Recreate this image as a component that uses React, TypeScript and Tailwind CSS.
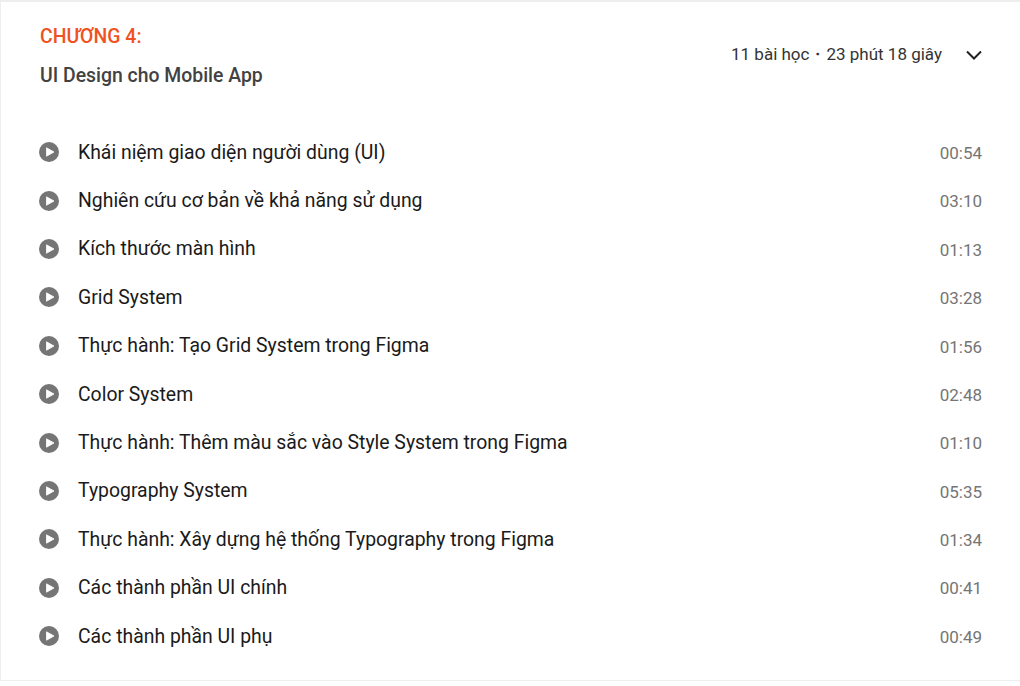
const lessons = [
  ['Khái niệm giao diện người dùng (UI)', '00:54'],
  ['Nghiên cứu cơ bản về khả năng sử dụng', '03:10'],
  ['Kích thước màn hình', '01:13'],
  ['Grid System', '03:28'],
  ['Thực hành: Tạo Grid System trong Figma', '01:56'],
  ['Color System', '02:48'],
  ['Thực hành: Thêm màu sắc vào Style System trong Figma', '01:10'],
  ['Typography System', '05:35'],
  ['Thực hành: Xây dựng hệ thống Typography trong Figma', '01:34'],
  ['Các thành phần UI chính', '00:41'],
  ['Các thành phần UI phụ', '00:49'],
];

function PlayIcon() {
  return (
    <svg width="20" height="20" viewBox="0 0 20 20" className="shrink-0">
      <circle cx="10" cy="10" r="10" fill="#757575" />
      <path d="M7.5 5.8 L15 10 L7.5 14.2 Z" fill="#fff" stroke="#fff" strokeLinejoin="round" strokeWidth="0.8" />
    </svg>
  );
}

export default function App() {
  return (
    <div className="h-[686px] w-[1020px] overflow-hidden bg-white font-['Roboto','Liberation_Sans',sans-serif]">
      <div className="h-[681px] border-t-2 border-b border-l border-[#eeeeee]">
        {/* chapter header */}
        <div className="flex items-center justify-between pl-[39px] pr-[37px] pt-[21px]">
          <div>
            <div className="text-[19.4px] leading-[28px] font-medium text-[#f05123]">CHƯƠNG 4:</div>
            <div className="mt-[11px] text-[19.4px] leading-[28px] font-medium text-[#424242]">UI Design cho Mobile App</div>
          </div>
          <div className="mb-[4px] flex items-center text-[17px] text-[#333333]">
            <span>11 bài học・23 phút 18 giây</span>
            <svg width="18" height="18" viewBox="0 0 18 18" className="ml-[23px]" fill="none" stroke="#212121" strokeWidth="2">
              <path d="M2 5.5 L9 12.5 L16 5.5" />
            </svg>
          </div>
        </div>

        {/* lessons */}
        <div className="mt-[38px] pl-[38px] pr-[38px]">
          {lessons.map(([title, time]) => (
            <div key={title} className="flex h-[48.4px] items-center">
              <PlayIcon />
              <span className="ml-[19px] flex-1 text-[19.4px] text-[#1a1a1a]">{title}</span>
              <span className="mt-[3px] text-[17px] text-[#757575]">{time}</span>
            </div>
          ))}
        </div>
      </div>
    </div>
  );
}
